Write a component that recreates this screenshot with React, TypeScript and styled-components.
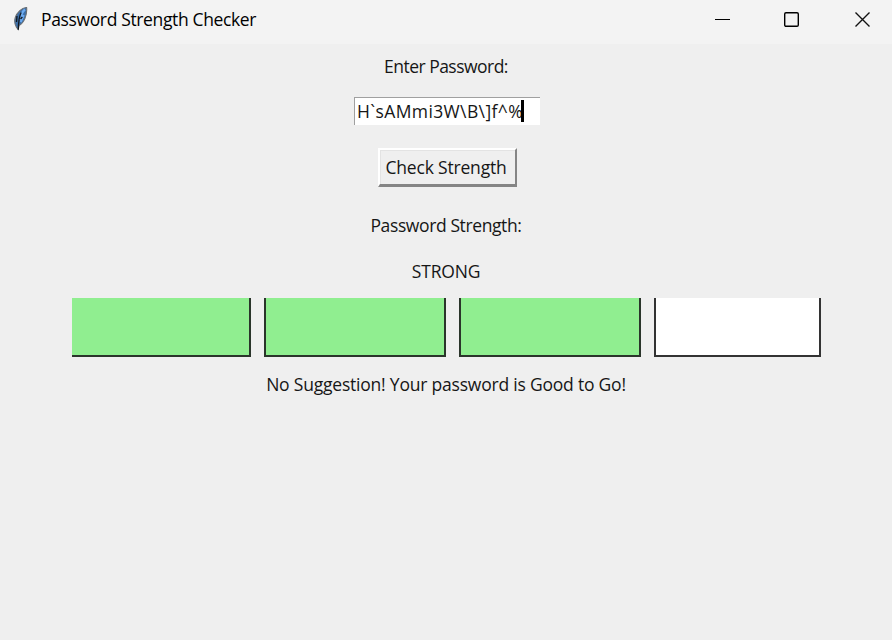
import React from 'react';
import styled, { createGlobalStyle } from 'styled-components';

const GlobalStyle = createGlobalStyle`
  * { box-sizing: border-box; }
  body { margin: 0; background: #efefef; overflow: hidden; }
`;

const Window = styled.div`
  width: 892px;
  height: 640px;
  background: #efefef;
  color: #161616;
  font-family: 'Open Sans', 'Noto Sans', sans-serif;
  font-size: 17.5px;
  line-height: 24px;
`;

const TitleBar = styled.header`
  display: flex;
  align-items: flex-start;
  height: 44px;
  padding: 7px 21px 0 12px;
  background: #f3f3f3;
  color: #000;
`;

const Title = styled.h1`
  flex: 1;
  margin: 0 0 0 11px;
  font-size: 17.5px;
  font-weight: 400;
  letter-spacing: -0.36px;
  white-space: nowrap;
`;

const WindowControls = styled.div`
  display: flex;
  gap: 54px;
  padding-top: 4px;

  svg:first-child { margin-right: -1px; }
  svg:last-child { margin-left: 1px; }
`;

const Form = styled.main`
  display: flex;
  flex-direction: column;
  align-items: center;
  padding-top: 10px;
`;

const Label = styled.div<{ $top?: number; $spacing: number }>`
  height: 24px;
  margin-top: ${({ $top = 0 }) => $top}px;
  letter-spacing: ${({ $spacing }) => $spacing}px;
  white-space: nowrap;
`;

const Entry = styled.div`
  display: flex;
  align-items: center;
  width: 186px;
  height: 28px;
  margin: 19px 0 0 2px;
  padding: 0 0 1px 2px;
  border-top: 1px solid #a0a0a0;
  border-left: 1px solid #a0a0a0;
  background: #fff;
  letter-spacing: 0.38px;
  white-space: nowrap;
`;

const EntryText = styled.span`
  width: 164px;
`;

const Caret = styled.span`
  width: 3px;
  height: 22px;
  background: #000;
`;

const Button = styled.button`
  width: 139px;
  height: 39px;
  margin: 23px 0 0 3px;
  padding: 0 3px 1px 0;
  border: solid;
  border-width: 2px 2px 3px 2px;
  border-color: #fff #858585 #858585 #fff;
  box-shadow: inset 1px 1px #e3e3e3;
  background: #efefef;
  color: inherit;
  font: inherit;
  letter-spacing: -0.18px;
  white-space: nowrap;
`;

const Meter = styled.div`
  display: flex;
  align-self: flex-start;
  gap: 13px;
  margin: 15px 0 0 72px;
`;

const Segment = styled.div<{ $width: number; $filled: boolean; $first: boolean }>`
  width: ${({ $width }) => $width}px;
  height: 59px;
  border: 2px solid ${({ $filled }) => ($filled ? '#2b352b' : '#333')};
  border-top: 0;
  border-left-width: ${({ $first }) => ($first ? 0 : 2)}px;
  background: ${({ $filled }) => ($filled ? '#90ee90' : '#fff')};
`;

const segments = [
  { width: 179, filled: true },
  { width: 182, filled: true },
  { width: 182, filled: true },
  { width: 167, filled: false },
];

function Feather() {
  return (
    <svg width="18" height="26" viewBox="0 0 18 26">
      <path d="M14.6.5C10 .8 5 5 3.3 10.5 2.2 14 2.5 17 4.4 20.2L6.2 22.5 7 18.6C12 16 15.4 8 14.6.5Z" fill="#3d6fa8" stroke="#6b7074" strokeWidth="1.1" />
      <path d="M13 2.5C9.5 5 8.7 9 8 13M11.7 8 8.6 15" fill="none" stroke="#6baaf0" strokeWidth="2.2" />
      <path d="M9.2 5.5C7.2 9 6.5 13 6.3 22.8M5 9 4.5 15M10.4 10 8.5 12" fill="none" stroke="#101820" strokeWidth="1.3" />
    </svg>
  );
}

export default function App() {
  return (
    <>
      <GlobalStyle />
      <Window>
        <TitleBar>
          <Feather />
          <Title>Password Strength Checker</Title>
          <WindowControls>
            <svg width="16" height="17" viewBox="0 0 16 17"><path d="M0 8.5h15" stroke="#000" /></svg>
            <svg width="16" height="17" viewBox="0 0 16 17"><rect x="0.7" y="1.7" width="13.6" height="13.6" rx="1.3" fill="none" stroke="#000" strokeWidth="1.4" /></svg>
            <svg width="16" height="17" viewBox="0 0 16 17"><path d="m0.5 1.5 14 14M14.5 1.5 0.5 15.5" stroke="#111" strokeWidth="1.4" /></svg>
          </WindowControls>
        </TitleBar>
        <Form>
          <Label $spacing={-0.52}>Enter Password:</Label>
          <Entry>
            <EntryText>{'H`sAMmi3W\\B\\]f^%'}</EntryText>
            <Caret />
          </Entry>
          <Button>Check Strength</Button>
          <Label $top={26} $spacing={-0.39}>Password Strength:</Label>
          <Label $top={22} $spacing={-0.17}>STRONG</Label>
          <Meter>
            {segments.map((segment, index) => (
              <Segment key={index} $width={segment.width} $filled={segment.filled} $first={index === 0} />
            ))}
          </Meter>
          <Label $top={15} $spacing={-0.21}>No Suggestion! Your password is Good to Go!</Label>
        </Form>
      </Window>
    </>
  );
}
